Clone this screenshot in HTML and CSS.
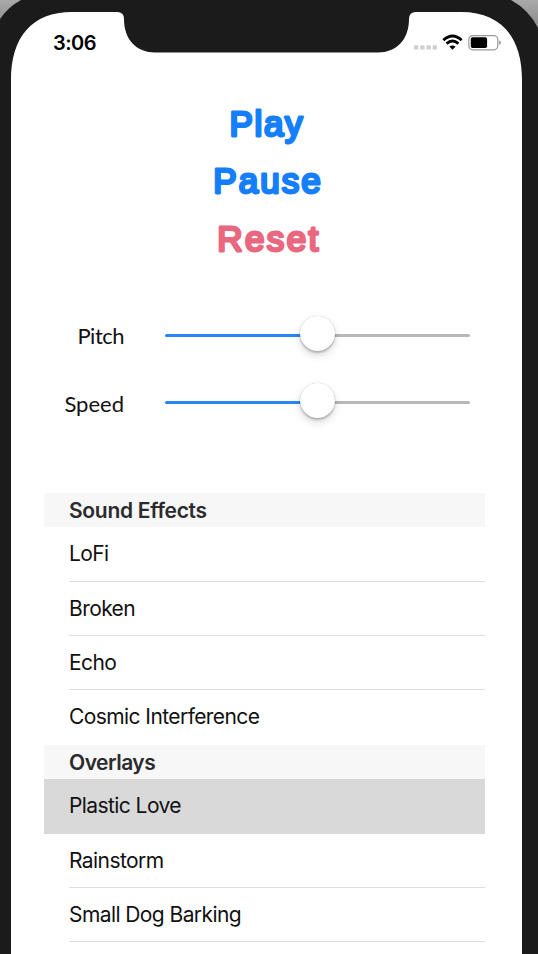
FILE: index.html
```html
<!DOCTYPE html>
<html lang="en">
<head>
<meta charset="utf-8">
<title>Audio Player</title>
<link rel="stylesheet" href="styles.css">
</head>
<body>
<div class="device">
  <svg class="frame" viewBox="0 0 538 954" aria-hidden="true">
    <defs><linearGradient id="desk" x1="0" y1="0" x2="0" y2="1"><stop offset="0" stop-color="#a9a9a9"/><stop offset="1" stop-color="#858585"/></linearGradient></defs>
    <rect width="538" height="32" fill="url(#desk)"/>
    <path fill="#1b1b1b" d="M0 19Q8 7 21 0H511Q529 10 538 28V954H0Z"/>
    <path fill="#fff" d="M11 954V80C11 37 32 12 72 12H117Q124 12 124 19C124 39 136 52.5 155 52.5H378C397 52.5 409 39 409 19Q409 12 416 12H461C501 12 522 37 522 80V954Z"/>
  </svg>
  <header class="status">
    <span class="time">3:06</span>
    <svg class="indicators" width="90" height="20" viewBox="0 0 90 20" aria-hidden="true">
      <g fill="#cfcfcf"><rect x="2" y="12.2" width="4.4" height="4.4" rx="1.2"/><rect x="8.2" y="12.2" width="4.4" height="4.4" rx="1.2"/><rect x="14.4" y="12.2" width="4.4" height="4.4" rx="1.2"/><rect x="20.6" y="12.2" width="4.4" height="4.4" rx="1.2"/></g>
      <g fill="none" stroke="#000" stroke-width="2.9"><path d="M31.4 7.2Q40.5-1.2 49.6 7.2"/><path d="M34.6 10.7Q40.5 5.4 46.4 10.7"/></g>
      <path d="M37.4 13.6Q40.5 11.2 43.6 13.6L40.5 16.8Z"/>
      <rect x="56.8" y="2.6" width="29" height="14.2" rx="4" fill="#fff" stroke="#999" stroke-width="1.2"/>
      <rect x="58.8" y="4.3" width="16.3" height="10.8" rx="1.8"/>
      <path fill="#999" d="M87.2 7.2Q89 7.8 89 9.6Q89 11.4 87.2 12Z"/>
    </svg>
  </header>
  <main>
    <div class="actions">
      <button class="action"><svg width="140" height="50"><text x="28.5" y="35.5" textLength="73">Play</text></svg></button>
      <button class="action"><svg width="140" height="50"><text x="12.3" y="35.5" textLength="107.5">Pause</text></svg></button>
      <button class="action reset"><svg width="140" height="50"><text x="16.3" y="36" textLength="101">Reset</text></svg></button>
    </div>
    <div class="sliders">
      <div class="control"><span class="label pitch">Pitch</span><div class="track"><i class="thumb"></i></div></div>
      <div class="control"><span class="label">Speed</span><div class="track"><i class="thumb"></i></div></div>
    </div>
    <section class="list">
      <h2 class="sound">Sound Effects</h2>
      <ul><li><span>LoFi</span></li><li><span>Broken</span></li><li><span>Echo</span></li><li><span>Cosmic Interference</span></li></ul>
      <h2 class="overlays">Overlays</h2>
      <ul><li class="selected"><span>Plastic Love</span></li><li><span>Rainstorm</span></li><li><span>Small Dog Barking</span></li><li></li></ul>
    </section>
  </main>
</div>
</body>
</html>
```
FILE: styles.css
```css
* { box-sizing: border-box; }
body { margin: 0; background: #fff; font-family: Inter, "Liberation Sans", sans-serif; }
.device { position: relative; width: 538px; height: 954px; overflow: hidden; }
.frame { position: absolute; inset: 0; width: 538px; height: 954px; }
.status { position: relative; height: 100px; padding: 33px 36px 0 53px; display: flex; justify-content: space-between; align-items: flex-start; }
.time { font-size: 20px; line-height: 20px; font-weight: 600; letter-spacing: -0.5px; }
.indicators { display: block; }
main { position: relative; }
.actions { height: 209px; display: flex; flex-direction: column; align-items: flex-start; padding-left: 201px; }
.action { height: 57.3px; padding: 0 0 7px; border: 0; background: none; color: #147efb; }
.action svg { display: block; overflow: visible; }
.action text { font: 35px "Liberation Sans", sans-serif; fill: currentColor; stroke: currentColor; stroke-width: 2.8px; stroke-linejoin: round; }
.action.reset { color: #e9677f; }
.sliders { padding-left: 44px; }
.control { height: 67px; display: grid; grid-template-columns: 80px 305px; column-gap: 41px; align-items: start; }
.label { text-align: right; font: 22px/28px Lato, sans-serif; padding-top: 14px; color: #111; }
.pitch { letter-spacing: -0.5px; padding-top: 13px; }
.track { position: relative; height: 3px; margin-top: 25px; border-radius: 2px; background: linear-gradient(to right, #2a86f7 50%, #b8b8b8 50%); }
.thumb { position: absolute; left: 135px; top: -18px; width: 35px; height: 35px; border-radius: 50%; background: #fff; box-shadow: 0 0 1px #0004, 0 2px 2px #0003, 0 4px 9px #00000026; }
.list { width: 441px; margin: 50px 0 0 44px; }
h2 { margin: 0; height: 34.4px; padding-left: 25px; background: #f7f7f7; color: #2b2b2d; font-size: 21px; font-weight: 600; line-height: 35px; letter-spacing: -0.3px; }
.overlays { letter-spacing: -0.5px; }
ul { list-style: none; margin: 0; padding: 0; }
li { height: 54.35px; padding-left: 25px; }
li span { display: block; height: 100%; border-bottom: 1px solid #dedee0; font-size: 21px; line-height: 54px; color: #111; letter-spacing: -0.58px; }
li:last-child span, .selected span { border-bottom: 0; }
.selected { background: #d9d9d9; }
```
